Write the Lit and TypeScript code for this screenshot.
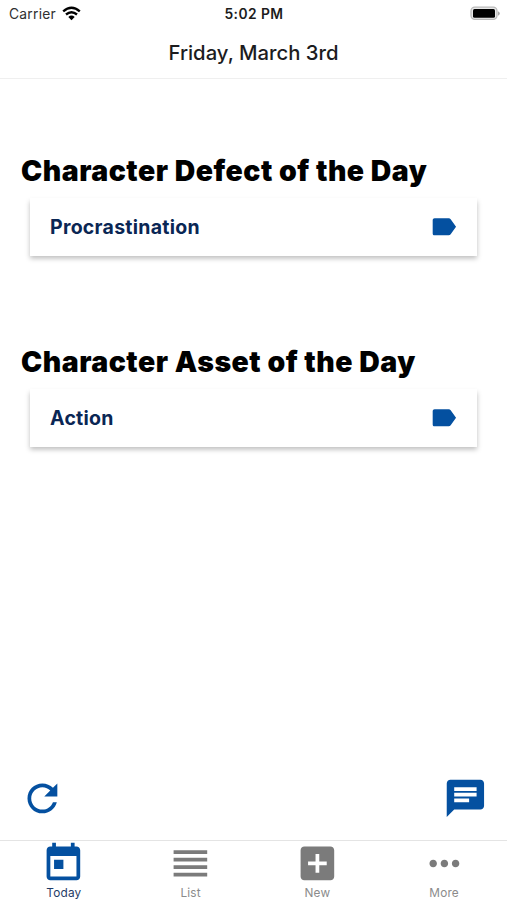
import { LitElement, html, css } from "lit";
import { customElement, property } from "lit/decorators.js";

const ICONS: Record<string, string> = {
  label: "M17.63 5.84C17.27 5.33 16.67 5 16 5H4.6C3.6 5 3 5.6 3 6.6v10.8c0 1 .6 1.6 1.6 1.6H16c.67 0 1.27-.33 1.63-.84L22 12l-4.37-6.16z",
  refresh: "M17.65 6.35C16.2 4.9 14.21 4 12 4c-4.42 0-7.99 3.58-7.99 8s3.57 8 7.99 8c3.73 0 6.84-2.55 7.73-6h-2.08c-.82 2.33-3.04 4-5.65 4-3.31 0-6-2.69-6-6s2.69-6 6-6c1.66 0 3.14.69 4.22 1.78L13 11h7V4l-2.35 2.35z",
  chat: "M20 2H4c-1.1 0-1.99.9-1.99 2L2 22l4-4h14c1.1 0 2-.9 2-2V4c0-1.1-.9-2-2-2zM6 9h12v2H6V9zm8 5H6v-2h8v2zm4-6H6V6h12v2z",
  today: "M19 3h-1V1h-2v2H8V1H6v2H5c-1.11 0-1.99.9-1.99 2L3 19c0 1.1.89 2 2 2h14c1.1 0 2-.9 2-2V5c0-1.1-.9-2-2-2zm0 16H5V8h14v11zM7 10h5v5H7z",
  list: "M3 15h18v-2H3v2zm0 4h18v-2H3v2zm0-8h18V9H3v2zm0-6v2h18V5H3z",
  add: "M19 3H5c-1.11 0-2 .9-2 2v14c0 1.1.89 2 2 2h14c1.1 0 2-.9 2-2V5c0-1.1-.9-2-2-2zm-2 10h-4v4h-2v-4H7v-2h4V7h2v4h4v2z",
  more: "M6 10c-1.1 0-2 .9-2 2s.9 2 2 2 2-.9 2-2-.9-2-2-2zm12 0c-1.1 0-2 .9-2 2s.9 2 2 2 2-.9 2-2-.9-2-2-2zm-6 0c-1.1 0-2 .9-2 2s.9 2 2 2 2-.9 2-2-.9-2-2-2z",
};

@customElement("md-icon")
export class MdIcon extends LitElement {
  @property() name = "";
  static styles = css`
    :host { display: block; width: 44.8px; height: 44.8px; flex: none; }
    svg { display: block; width: 100%; height: 100%; fill: currentColor; overflow: visible; }
  `;
  render() {
    return html`<svg viewBox="0 0 24 24"><path fill-rule="evenodd" d=${ICONS[this.name]}></path></svg>`;
  }
}

@customElement("day-section")
export class DaySection extends LitElement {
  @property() heading = "";
  @property() value = "";
  static styles = css`
    :host { display: block; }
    .heading {
      margin: 0 0 0 21px; height: 36px; line-height: 36px; white-space: nowrap;
      font-size: 28.4px; font-weight: 900; letter-spacing: 0.52px; color: #000;
    }
    .card {
      box-sizing: border-box; height: 58px; margin: 9px 30px 0; padding: 0 19px 0 20px;
      display: flex; align-items: center; justify-content: space-between;
      background: #fff; box-shadow: 0 2.5px 5px rgba(0, 0, 0, 0.26);
    }
    .value { font-size: 19.5px; font-weight: 650; letter-spacing: 0.27px; color: #0a2654; white-space: nowrap; }
    md-icon { width: 29.5px; height: 29.5px; color: #0450a0; }
  `;
  render() {
    return html`
      <h2 class="heading">${this.heading}</h2>
      <div class="card"><span class="value">${this.value}</span><md-icon name="label"></md-icon></div>
    `;
  }
}

@customElement("app-root")
export class AppRoot extends LitElement {
  static styles = css`
    :host {
      display: flex; flex-direction: column; height: 900px; overflow: hidden;
      background: #fff; font-family: Inter, "Liberation Sans", sans-serif;
    }
    .status {
      height: 27px; display: grid; grid-template-columns: 1fr auto 1fr; align-items: center;
      padding: 0 7px 0 9px; font-size: 13.8px; color: #1c1c1c;
    }
    .carrier { display: flex; align-items: center; gap: 6px; color: #303030; }
    .carrier-name { letter-spacing: 0.25px; }
    .wifi { width: 19px; height: 15px; display: block; }
    .time { font-weight: 600; letter-spacing: 0.45px; margin-right: 1px; }
    .battery { width: 31px; height: 15px; justify-self: end; display: block; }
    .title {
      height: 51px; line-height: 51px; text-align: center; border-bottom: 1px solid #efefef;
      font-size: 20.3px; font-weight: 500; color: #1c1c1e;
    }
    main { flex: 1; display: flex; flex-direction: column; padding-top: 74px; }
    .second { margin-top: 88px; }
    .actions {
      margin-top: auto; display: flex; justify-content: space-between;
      padding: 0 19.6px 19.2px 20px; color: #0450a0;
    }
    nav { height: 59px; display: grid; grid-template-columns: repeat(4, 1fr); border-top: 1px solid #e4e4e4; }
    .tab { display: flex; flex-direction: column; align-items: center; color: #7b7b7b; padding-left: 1px; }
    .tab md-icon { margin-top: -0.5px; }
    .tab.active { color: #0450a0; }
    .name { margin-top: 0.7px; line-height: 15px; font-size: 11.8px; letter-spacing: 0.2px; color: #8b8b8b; }
    .active .name { color: #1f3c66; }
  `;

  private tabs = [
    { icon: "today", name: "Today", active: true },
    { icon: "list", name: "List", active: false },
    { icon: "add", name: "New", active: false },
    { icon: "more", name: "More", active: false },
  ];

  render() {
    return html`
      <div class="status">
        <div class="carrier">
          <span class="carrier-name">Carrier</span>
          <svg class="wifi" viewBox="0 0 19 15" fill="none" stroke="#000" stroke-width="2.4">
            <path d="M1.2 5.3Q9.5-1.8 17.8 5.3"></path>
            <path d="M4 8.5Q9.5 3.9 15 8.5"></path>
            <path d="M9.5 14.2L6.3 11Q9.5 8.2 12.7 11Z" fill="#000" stroke="none"></path>
          </svg>
        </div>
        <div class="time">5:02 PM</div>
        <svg class="battery" viewBox="0 0 31 15">
          <rect x="2" y="1.2" width="26" height="12.2" rx="3.8" fill="#e8e8e8" stroke="#b9b9b9" stroke-width="1.3"></rect>
          <rect x="4" y="3" width="22" height="8.8" rx="1.5" fill="#000"></rect>
          <path d="M29 5.3q1.8 .8 1.8 2.2t-1.8 2.2z" fill="#a8a8a8"></path>
        </svg>
      </div>
      <div class="title">Friday, March 3rd</div>
      <main>
        <day-section heading="Character Defect of the Day" value="Procrastination"></day-section>
        <day-section class="second" heading="Character Asset of the Day" value="Action"></day-section>
        <div class="actions"><md-icon name="refresh"></md-icon><md-icon name="chat"></md-icon></div>
      </main>
      <nav>
        ${this.tabs.map((t) => html`
          <div class="tab ${t.active ? "active" : ""}">
            <md-icon name=${t.icon}></md-icon><span class="name">${t.name}</span>
          </div>`)}
      </nav>
    `;
  }
}
